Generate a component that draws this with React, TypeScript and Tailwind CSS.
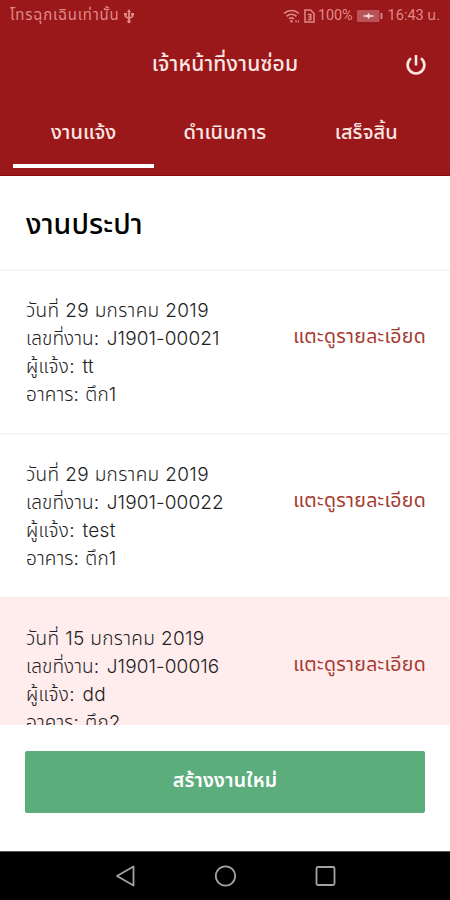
import React, { useState } from "react";

type Job = {
  id: string;
  date: string;
  code: string;
  reporter: string;
  building: string;
  urgent?: boolean;
};

const jobs: Job[] = [
  { id: "21", date: "วันที่ 29 มกราคม 2019", code: "J1901-00021", reporter: "tt", building: "ตึก1" },
  { id: "22", date: "วันที่ 29 มกราคม 2019", code: "J1901-00022", reporter: "test", building: "ตึก1" },
  { id: "16", date: "วันที่ 15 มกราคม 2019", code: "J1901-00016", reporter: "dd", building: "ตึก2", urgent: true },
];

const tabs = ["งานแจ้ง", "ดำเนินการ", "เสร็จสิ้น"];

const StatusBar: React.FC = () => (
  <div className="flex h-8 items-center justify-between px-[10px] font-['Roboto','Noto_Sans_Thai',sans-serif] text-[14.5px] text-[#e08a88]">
    <div className="flex items-center gap-[5px]">
      <span className="whitespace-nowrap pb-[2px] text-[15px] tracking-[0.75px]">โทรฉุกเฉินเท่านั้น</span>
      <svg width="10" height="14" viewBox="0 0 10 14" fill="none" stroke="currentColor" strokeWidth="1.8">
        <path d="M5 2v10M1.500 4.500v3L5 9.500l3.500-2v-3" />
        <path d="M5 0L3 3h4zM3.500 11h3v3h-3zM0 4h3v2.500H0zM7 4h3v2.500H7z" fill="currentColor" stroke="none" />
      </svg>
    </div>
    <div className="flex items-center">
      <svg width="17" height="14" viewBox="0 0 17 14" fill="none" stroke="currentColor" strokeWidth="1.6">
        <path d="M1 4.500c4.500-4 10.500-4 15 0M3.500 7.300c3-2.700 7-2.700 10 0M6 10c1.500-1.400 3.500-1.400 5 0" />
        <circle cx="8.500" cy="12.200" r="1.200" fill="currentColor" stroke="none" />
        <path d="M13 11v2.500M15.500 11.500v2" strokeWidth="1.200" />
      </svg>
      <svg className="ml-[4px]" width="11" height="14" viewBox="0 0 11 14" fill="none" stroke="currentColor" strokeWidth="1.500">
        <path d="M1 1h5.500L10 4.500V13H1z" />
        <path d="M3.800 5.500h3v5h-3M4.500 8h2" />
      </svg>
      <span className="ml-[3px] tracking-[-0.1px]">100%</span>
      <svg className="ml-[4px]" width="26" height="14" viewBox="0 0 26 14">
        <rect x="0" y="1" width="22.500" height="12" rx="1" fill="#b9525a" />
        <rect x="23.500" y="4" width="2" height="6" fill="#d98080" />
        <path d="M6 6.500l4-.5 1.500-2 1.500 2 4 .5v1l-4 .5-1.500 2-1.500-2-4-.5z" fill="#f5d5d2" />
      </svg>
      <span className="ml-[5px] whitespace-nowrap">16:43 น.</span>
    </div>
  </div>
);

const JobRow: React.FC<{ job: Job }> = ({ job }) => (
  <li
    className={`flex h-[164px] shrink-0 items-start justify-between border-t-2 pr-[24px] pl-[26px] pt-[26px] ${
      job.urgent ? "border-[#fdeced] bg-[#ffeced]" : "border-[#f5f5f5] bg-white"
    }`}
  >
    <div className="text-[19px] font-light leading-[28px] whitespace-nowrap text-[#222]">
      <p className="tracking-[0.35px]">{job.date}</p>
      <p className="tracking-[0.1px] [word-spacing:2px]">เลขที่งาน: {job.code}</p>
      <p className="tracking-[0.3px] [word-spacing:2px]">ผู้แจ้ง: {job.reporter}</p>
      <p className="tracking-[0.1px] [word-spacing:1px]">อาคาร: {job.building}</p>
    </div>
    <button className="mt-[25px] text-[19.5px] leading-[28px] tracking-[0.3px] whitespace-nowrap text-[#a63a30]">
      แตะดูรายละเอียด
    </button>
  </li>
);

const App: React.FC = () => {
  const [activeTab, setActiveTab] = useState<number>(0);

  return (
    <div className="flex h-[900px] w-[450px] flex-col overflow-hidden bg-white font-['Inter','Noto_Sans_Thai','Noto_Sans',sans-serif]">
      <header className="flex h-[176px] shrink-0 flex-col border-b border-[#8a0b0e] bg-[#9a171a] text-[#fbe6e2]">
        <StatusBar />
        <div className="grid h-[66px] grid-cols-[50px_1fr_50px] items-center">
          <h1 className="col-start-2 pb-[2px] text-center text-[21px] font-medium tracking-[0.2px]">เจ้าหน้าที่งานซ่อม</h1>
          <button className="pl-[5px]">
            <svg width="22" height="22" viewBox="0 0 22 22" fill="none" stroke="currentColor" strokeWidth="2.600">
              <path d="M11 1v10.500M6 4.300a8.400 8.400 0 1 0 10 0" />
            </svg>
          </button>
        </div>
        <nav className="grid h-[70px] grid-cols-3 px-[13px]">
          {tabs.map((tab, i) => (
            <button
              key={tab}
              onClick={() => setActiveTab(i)}
              className={`border-b-4 pt-[2px] text-[20px] font-medium tracking-[0.1px] ${
                activeTab === i ? "border-white" : "border-transparent"
              }`}
            >
              {tab}
            </button>
          ))}
        </nav>
      </header>
      <main className="h-[549px] shrink-0 overflow-hidden">
        <h2 className="flex h-[93px] items-center px-[26px] pt-[4px] text-[28.5px] font-medium tracking-[0.1px] text-black">
          งานประปา
        </h2>
        <ul className="flex flex-col">
          {jobs.map((job) => (
            <JobRow key={job.id} job={job} />
          ))}
        </ul>
      </main>
      <div className="h-[126px] shrink-0 px-[25px] pt-[26px]">
        <button className="h-[62px] w-full rounded-[2px] bg-[#5cad7c] pb-[3px] text-[19.5px] font-semibold tracking-[0.2px] text-white">
          สร้างงานใหม่
        </button>
      </div>
      <footer className="flex h-[49px] shrink-0 items-center justify-center gap-[78px] border-t border-[#555] bg-black text-[#a3a3a3]">
        <svg width="22" height="22" viewBox="0 0 22 22" fill="none" stroke="currentColor" strokeWidth="1.8" strokeLinejoin="round">
          <path d="M19.500 1.500v19L3 11z" />
        </svg>
        <svg width="22" height="22" viewBox="0 0 22 22" fill="none" stroke="currentColor" strokeWidth="1.8">
          <circle cx="11.500" cy="11" r="9.700" />
        </svg>
        <svg width="22" height="22" viewBox="0 0 22 22" fill="none" stroke="currentColor" strokeWidth="1.8">
          <rect x="2.500" y="2" width="18" height="18" rx="1.500" />
        </svg>
      </footer>
    </div>
  );
};

export default App;
